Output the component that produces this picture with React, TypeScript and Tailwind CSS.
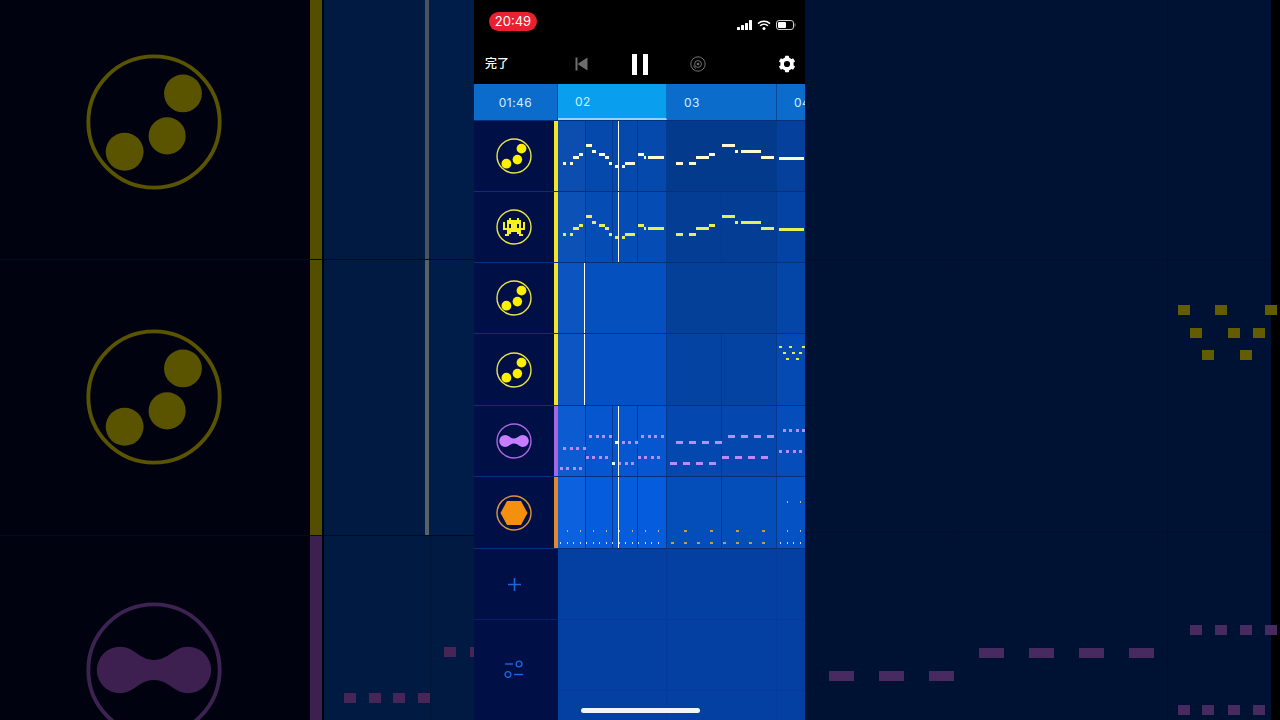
type Note = { x: number; y: number; w: number; c: string; h?: number };

const dashes = (y: number, xs: number[], w: number, c: string, h = 3): Note[] =>
  xs.map((x) => ({ x, y, w, c, h }));

const steps = (start: number, gap: number, n: number) =>
  Array.from({ length: n }, (_, i) => start + gap * i);

// melody shared by the first two tracks: x, width, y
const melody: [number, number, number][] = [
  [5, 3, 42], [12, 3, 42], [15, 6, 36], [21, 4, 33], [28, 6, 24], [34, 4, 30], [41, 6, 33], [47, 4, 36],
  [51, 3, 42], [57, 3, 45], [64, 3, 45], [67, 10, 42], [80, 6, 33], [86, 2, 36], [90, 16, 36],
  [118, 7, 42], [131, 7, 42], [138, 13, 36], [151, 6, 33], [164, 13, 24], [177, 3, 30], [183, 20, 30],
  [203, 13, 36], [221, 25, 37],
];

const melodyNotes = (c: string): Note[] => melody.map(([x, w, y]) => ({ x, w, y, c, h: 3 }));

const purple = '#b98cff';
const purpleNotes: Note[] = [
  ...dashes(30, [31, 38, 44, 51], 3, purple),
  ...dashes(42, [5, 12, 18, 25], 3, purple),
  ...dashes(51, [28, 34, 41, 47], 3, purple),
  ...dashes(62, [2, 8, 15, 21], 3, purple),
  ...dashes(36, [57], 3, '#e8f6ff'),
  ...dashes(36, [64, 70, 77], 3, purple),
  ...dashes(57, [54], 3, '#e8f6ff'),
  ...dashes(57, [60, 67, 73], 3, purple),
  ...dashes(30, [83, 90, 96, 103], 3, purple),
  ...dashes(51, [80, 86, 93, 99], 3, purple),
  ...dashes(36, [118, 131, 144, 157], 7, purple),
  ...dashes(57, [112, 125, 138, 151], 7, purple),
  ...dashes(30, [170, 183, 196, 209], 7, purple),
  ...dashes(51, [164, 177, 190, 203], 7, purple),
  ...dashes(24, [225, 231, 238, 244], 3, purple),
  ...dashes(45, [221, 228, 235, 241], 3, purple),
];

const drumNotes: Note[] = [
  ...dashes(66, steps(2, 6.5, 16), 1, '#e3d6bd', 2),
  ...dashes(66, steps(113, 13, 8), 3, '#c49a55', 2),
  ...dashes(66, steps(222, 6.5, 4), 1, '#e3d6bd', 2),
  ...dashes(54, steps(9, 13, 8), 1, '#c9b48c', 2),
  ...dashes(54, steps(126, 26, 4), 3, '#c49a55', 2),
  ...dashes(54, [229, 242], 1, '#c9b48c', 2),
  ...dashes(25, [229, 242], 1, '#c9b48c', 2),
];

const yellowDots: Note[] = [
  ...dashes(13, [221, 231, 244], 3, '#e8ec4a', 2),
  ...dashes(19, [225, 234, 241], 3, '#e8ec4a', 2),
  ...dashes(25, [228, 238], 3, '#e8ec4a', 2),
];

const beats = [27, 54, 79];

const rows = [
  { h: 'h-[71px]', icon: 'dots', strip: 'bg-[#f4e626]', bg: ['bg-[#0549ad]', 'bg-[#033a8c]', 'bg-[#04409c]'], lines: [...beats, 163], play: 60, notes: melodyNotes('#fdfbd2') },
  { h: 'h-[71px]', icon: 'invader', strip: 'bg-[#f4e626]', bg: ['bg-[#054db4]', 'bg-[#033d94]', 'bg-[#0443a4]'], lines: [...beats, 163], play: 60, notes: melodyNotes('#e6ee58') },
  { h: 'h-[71px]', icon: 'dots', strip: 'bg-[#f4e626]', bg: ['bg-[#0550bf]', 'bg-[#043f98]', 'bg-[#0445a8]'], lines: [], play: 26, notes: [] },
  { h: 'h-[72px]', icon: 'dots', strip: 'bg-[#f4e626]', bg: ['bg-[#0550c2]', 'bg-[#0443a2]', 'bg-[#044ab2]'], lines: [163], play: 26, notes: yellowDots },
  { h: 'h-[71px]', icon: 'blob', strip: 'bg-[#a865e0]', bg: ['bg-[#0556cf]', 'bg-[#0447ae]', 'bg-[#044dba]'], lines: [...beats, 163], play: 60, notes: purpleNotes },
  { h: 'h-[72px]', icon: 'hex', strip: 'bg-[#df8a2c]', bg: ['bg-[#055cdd]', 'bg-[#044eba]', 'bg-[#0452c4]'], lines: [...beats, 163], play: 60, notes: drumNotes },
];

const invader = [
  '...#...#...',
  '..#######..',
  '#.#######.#',
  '#.#.###.#.#',
  '#.#.###.#.#',
  '###########',
  '..#######..',
  '..##...##..',
  '.##.....##.',
];

function Dots({ c }: { c: string }) {
  return (
    <>
      <circle cx="7.5" cy="-7.4" r="4.9" fill={c} />
      <circle cx="3.4" cy="3.6" r="4.8" fill={c} />
      <circle cx="-7.6" cy="7.7" r="4.9" fill={c} />
    </>
  );
}

function Blob({ c }: { c: string }) {
  return <path d="M-8.8-6C-5-6-4-2.6 0-2.6S5-6 8.8-6A6 6 0 0 1 8.8 6C5 6 4 2.6 0 2.6S-5 6-8.8 6A6 6 0 0 1-8.8-6Z" fill={c} />;
}

function TrackIcon({ kind, size = 36 }: { kind: string; size?: number }) {
  const ring = kind === 'blob' ? '#a868e0' : kind === 'hex' ? '#d8963c' : '#e8e44a';
  return (
    <svg width={size} height={size} viewBox="-18 -18 36 36">
      <circle r="17" fill="none" stroke={ring} strokeWidth="1.4" />
      {kind === 'dots' && <Dots c="#fff000" />}
      {kind === 'blob' && <Blob c="#c77dff" />}
      {kind === 'hex' && <polygon points="-13.5,0 -7,-12 7,-12 13.5,0 7,12 -7,12" fill="#f5900f" />}
      {kind === 'invader' &&
        invader.map((line, r) =>
          line.split('').map((ch, i) =>
            ch === '#' ? <rect key={`${r}-${i}`} x={-11 + i * 2} y={-9 + r * 2} width="2" height="2" fill="#f6f020" shapeRendering="crispEdges" /> : null,
          ),
        )}
    </svg>
  );
}

function Notes({ notes }: { notes: Note[] }) {
  return (
    <>
      {notes.map((n, i) => (
        <div
          key={i}
          className="absolute"
          style={{ left: n.x, top: n.y - (n.h ?? 3) / 2, width: n.w, height: n.h ?? 3, background: n.c }}
        />
      ))}
    </>
  );
}

function Measures({ bg }: { bg: string[] }) {
  return (
    <div className="flex h-full">
      <div className={`w-[109px] shrink-0 border-r border-[#033a8c] ${bg[0]}`} />
      <div className={`w-[110px] shrink-0 border-r border-[#033a8c] ${bg[1]}`} />
      <div className={`flex-1 ${bg[2]}`} />
    </div>
  );
}

function StatusBar() {
  return (
    <div className="flex h-[45px] items-start justify-between pl-[15px] pr-[8px] pt-[12px]">
      <div className="flex h-[19px] w-[48px] items-center justify-center rounded-full bg-[#e8202f] text-[13px] text-white font-['Inter',sans-serif]">
        20:49
      </div>
      <svg width="60" height="12" viewBox="0 0 60 12" className="mt-[8px]">
        <rect x="0" y="7" width="3" height="3" rx="0.5" fill="#fff" />
        <rect x="4" y="5" width="3" height="5" rx="0.5" fill="#fff" />
        <rect x="8" y="3" width="3" height="7" rx="0.5" fill="#fff" />
        <rect x="12" y="0" width="3" height="10" rx="0.5" fill="#fff" />
        <path d="M21 3.6a9 9 0 0 1 12 0M23 5.8a6 6 0 0 1 8 0" fill="none" stroke="#fff" strokeWidth="1.5" />
        <circle cx="27" cy="8.4" r="1.5" fill="#fff" />
        <rect x="39.5" y="0.5" width="17" height="9" rx="2.5" fill="none" stroke="#d0d0d0" />
        <rect x="41" y="2" width="8" height="6" rx="1" fill="#fff" />
        <rect x="57.5" y="3.5" width="1" height="3" fill="#888" />
      </svg>
    </div>
  );
}

function Gear() {
  return (
    <svg width="18" height="18" viewBox="-9 -9 18 18" className="ml-[72px] -mt-[1px]">
      <circle r="4.9" fill="none" stroke="#fff" strokeWidth="3.6" />
      {[0, 60, 120, 180, 240, 300].map((a) => (
        <rect key={a} x="-2" y="-8.2" width="4" height="3" rx="0.6" fill="#fff" transform={`rotate(${a})`} />
      ))}
    </svg>
  );
}

function Toolbar() {
  return (
    <div className="relative flex h-[39px] items-center">
      <span className="ml-[11px] -mt-[3px] w-[90px] text-[12px] font-medium text-white font-['Noto_Sans_CJK_JP',sans-serif]">完了</span>
      <svg width="13" height="14" viewBox="0 0 13 14" className="-mt-[1px]">
        <rect x="0.5" y="0.5" width="2" height="13" fill="#6e6e6e" />
        <path d="M12.5.5v13L2.5 7Z" fill="#6e6e6e" />
      </svg>
      <div className="ml-[44px] -mt-[1px] flex gap-[6px]">
        <div className="h-[21px] w-[5px] bg-white" />
        <div className="h-[21px] w-[5px] bg-white" />
      </div>
      <svg width="16" height="16" viewBox="0 0 16 16" className="ml-[42px] -mt-[1px]">
        <circle cx="8" cy="8" r="7.2" fill="none" stroke="#707070" />
        <circle cx="8" cy="8" r="3.4" fill="none" stroke="#707070" />
        <circle cx="8" cy="8" r="1.3" fill="#707070" />
        <path d="M3.5 9.5a5 5 0 0 0 2.5 3" fill="none" stroke="#707070" />
      </svg>
      <Gear />
    </div>
  );
}

function Ruler() {
  const label = "pt-[2px] text-[12px] tracking-[0.5px] text-[#d5ecff] font-['Inter',sans-serif]";
  return (
    <div className="flex h-[37px] border-b border-[#04307c]">
      <div className={`flex w-[84px] shrink-0 items-center justify-center border-r border-[#04489c] bg-[#0b6ccc] ${label}`}>01:46</div>
      <div className={`flex w-[109px] shrink-0 items-center border-b-2 border-r border-b-[#8fd6fa] border-r-[#0a70c4] bg-[#0a9fee] pl-[17px] ${label}`}>02</div>
      <div className={`flex w-[110px] shrink-0 items-center border-r border-[#04489c] bg-[#0b6ccc] pl-[17px] ${label}`}>03</div>
      <div className={`flex flex-1 items-center overflow-hidden bg-[#0b6ccc] pl-[17px] ${label}`}>04</div>
    </div>
  );
}

function TrackRow({ row }: { row: (typeof rows)[number] }) {
  return (
    <div className={`flex ${row.h} border-b border-[#04307c]`}>
      <div className="flex w-[80px] shrink-0 items-center justify-center bg-[#000f45]">
        <TrackIcon kind={row.icon} />
      </div>
      <div className={`w-[4px] shrink-0 ${row.strip}`} />
      <div className="relative flex-1 overflow-hidden">
        <Measures bg={row.bg} />
        <div className="absolute left-0 top-0 h-full w-[27px] bg-white/[0.03]" />
        {row.lines.map((x) => (
          <div key={x} className="absolute top-0 h-full w-px bg-[#04388c]" style={{ left: x }} />
        ))}
        <Notes notes={row.notes} />
        <div className="absolute top-0 h-full w-px bg-white" style={{ left: row.play }} />
      </div>
    </div>
  );
}

function Phone() {
  return (
    <div className="relative flex w-[331px] shrink-0 flex-col bg-black">
      <StatusBar />
      <Toolbar />
      <Ruler />
      {rows.map((row, i) => (
        <TrackRow key={i} row={row} />
      ))}
      <div className="flex h-[71px]">
        <div className="flex w-[84px] shrink-0 items-center justify-center border-b border-[#02206a] bg-[#000f45] pr-[3px]">
          <svg width="13" height="13" viewBox="0 0 13 13" stroke="#1f66dc" strokeWidth="1.6">
            <path d="M0 6.5h13M6.5 0v13" />
          </svg>
        </div>
        <div className="flex flex-1 border-b border-[#033c98] bg-[#0340a2]">
          <div className="w-[109px] border-r border-[#033c98]" />
          <div className="w-[110px] border-r border-[#033c98]" />
        </div>
      </div>
      <div className="flex flex-1">
        <div className="flex w-[84px] shrink-0 items-center justify-center bg-[#000f45] pr-[4px] pb-[2px]">
          <svg width="20" height="18" viewBox="0 0 20 18" fill="none" stroke="#1f66dc" strokeWidth="1.4">
            <path d="M1 4h8" />
            <circle cx="15" cy="4" r="2.9" />
            <circle cx="4" cy="14.5" r="2.9" />
            <path d="M10 14.5h9" />
          </svg>
        </div>
        <div className="flex-1 bg-[#0340a2]">
          <div className="flex h-[71px] border-b border-[#033c98]">
            <div className="w-[109px] border-r border-[#033c98]" />
            <div className="w-[110px] border-r border-[#033c98]" />
          </div>
          <div className="flex h-full">
            <div className="w-[109px] border-r border-[#033c98]" />
            <div className="w-[110px] border-r border-[#033c98]" />
          </div>
        </div>
      </div>
      {/* home indicator */}
      <div className="absolute bottom-[7px] left-[107px] h-[5px] w-[119px] rounded-full bg-[#f0f4fb]" />
    </div>
  );
}

function LeftRow({ h, pt, bar, ring, line, children }: { h: string; pt: string; bar: string; ring: string; line: string; children: React.ReactNode }) {
  return (
    <div className={`flex shrink-0 ${h} border-b border-[#000a20]`}>
      <div className={`flex w-[310px] shrink-0 justify-center bg-[#00030f] ${pt}`}>
        <svg width="136" height="136" viewBox="-17.6 -17.6 35.2 35.2" className="-ml-[2px] shrink-0">
          <circle r="17" fill="none" stroke={ring} strokeWidth="1" />
          {children}
        </svg>
      </div>
      <div className={`w-[12px] shrink-0 ${bar}`} />
      <div className="w-[2px] shrink-0 bg-[#00040f]" />
      <div className="relative flex flex-1">
        <div className="w-[101px] bg-[#001a42]" />
        <div className={`w-[4px] ${line}`} />
        <div className="flex-1 bg-[#001c48]" />
      </div>
    </div>
  );
}

function LeftPanel() {
  const y = '#5a5400';
  return (
    <div className="flex h-full w-[474px] shrink-0 flex-col overflow-hidden bg-[#00030f]">
      <LeftRow h="h-[260px]" pt="pt-[54px]" bar="bg-[#544e00]" ring={y} line="bg-[#4a5260]">
        <Dots c={y} />
      </LeftRow>
      <LeftRow h="h-[276px]" pt="pt-[69px]" bar="bg-[#544e00]" ring={y} line="bg-[#5a6068]">
        <Dots c={y} />
      </LeftRow>
      <div className="flex min-h-0 flex-1">
        <div className="flex w-[310px] shrink-0 justify-center bg-[#00030f] pt-[66px]">
          <svg width="136" height="136" viewBox="-17.6 -17.6 35.2 35.2" className="-ml-[2px] shrink-0">
            <circle r="17" fill="none" stroke="#3e2252" strokeWidth="1" />
            <Blob c="#3e2050" />
          </svg>
        </div>
        <div className="w-[12px] shrink-0 bg-[#3e2050]" />
        <div className="w-[2px] shrink-0 bg-[#00040f]" />
        <div className="relative flex-1 bg-[#001a42]">
          <div className="absolute bottom-0 left-[106px] top-0 w-px bg-[#001538]" />
          <Notes notes={[...dashes(162, [20, 45, 69, 94], 12, '#472557', 10), ...dashes(116, [120, 146], 12, '#472557', 10)]} />
        </div>
      </div>
    </div>
  );
}

function RightPanel() {
  const yl = '#645c00';
  const pu = '#472a5f';
  return (
    <div className="flex flex-1">
      <div className="flex w-[466px] flex-col bg-[#001233]">
        <div className="flex h-[260px] border-b border-[#000e28]">
          <div className="w-[363px] border-r border-[#000e28]" />
        </div>
        <div className="relative flex h-[273px] border-b border-[#000e28]">
          <div className="w-[149px] border-r border-[#000e28]" />
          <div className="w-[214px] border-r border-[#000e28]" />
          <Notes
            notes={[
              ...dashes(50, [373, 410, 460], 12, yl, 10),
              ...dashes(73, [385, 423, 448], 12, yl, 10),
              ...dashes(95, [397, 435], 12, yl, 10),
            ]}
          />
        </div>
        <div className="relative flex flex-1">
          <div className="w-[149px] border-r border-[#000e28]" />
          <div className="w-[214px] border-r border-[#000e28]" />
          <Notes
            notes={[
              ...dashes(97, [385, 410, 435, 460], 12, pu, 10),
              ...dashes(120, [174, 224, 274, 324], 25, pu, 10),
              ...dashes(143, [24, 74, 124], 25, pu, 10),
              ...dashes(177, [373, 397, 423, 448], 12, pu, 10),
            ]}
          />
        </div>
      </div>
      <div className="flex-1 bg-black" />
    </div>
  );
}

export default function App() {
  return (
    <div className="flex h-screen w-full overflow-hidden bg-black">
      <LeftPanel />
      <Phone />
      <RightPanel />
    </div>
  );
}
